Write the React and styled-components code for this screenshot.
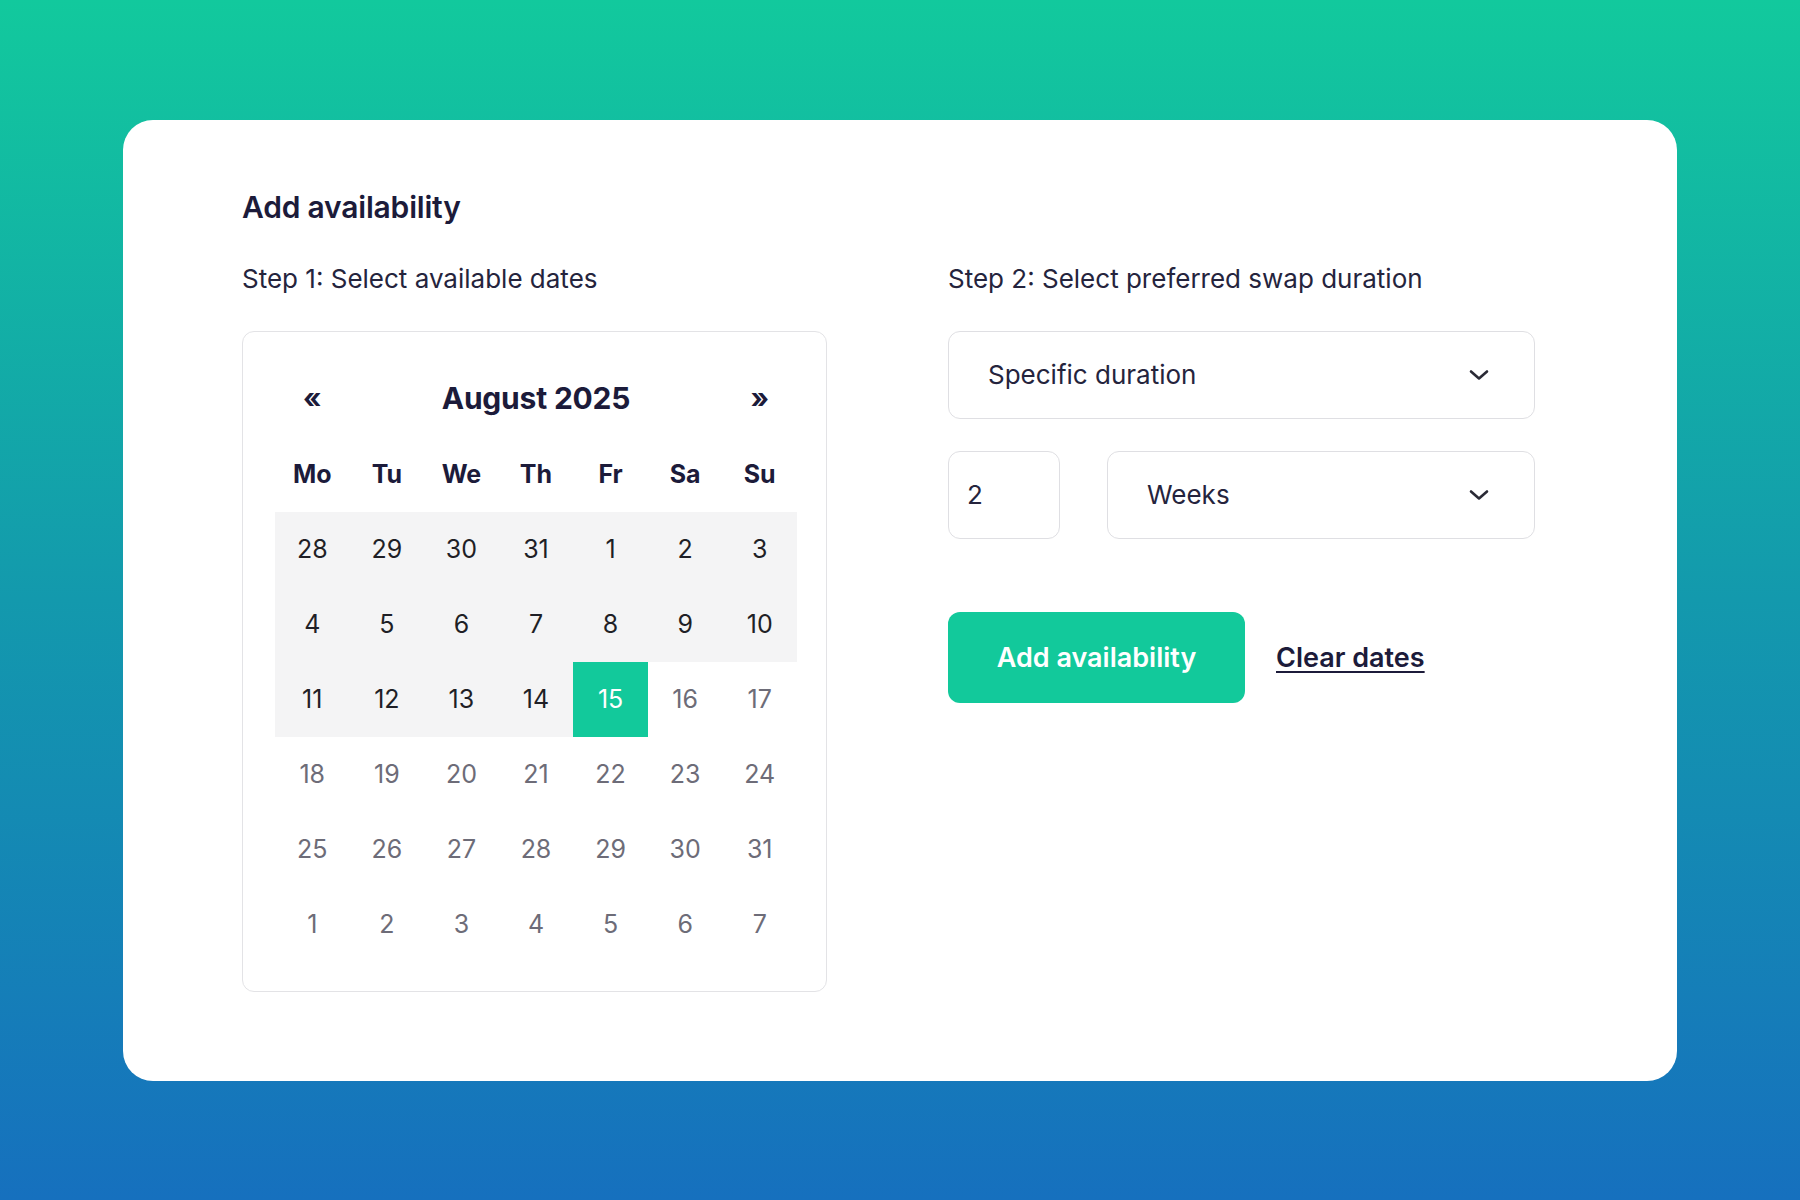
import React from "react";
import styled, { createGlobalStyle } from "styled-components";

const GlobalStyle = createGlobalStyle`
  html, body { margin: 0; padding: 0; }
  body {
    font-family: Inter, "Noto Sans", "Liberation Sans", sans-serif;
    background: linear-gradient(180deg, #12c99d 0%, #1399ad 50%, #1670be 100%);
    min-height: 1200px;
  }
  * { box-sizing: border-box; }
`;

const Page = styled.div`
  width: 1800px;
  height: 1200px;
  display: flex;
  align-items: center;
  justify-content: center;
`;

const Card = styled.section`
  width: 1554px;
  height: 961px;
  background: #ffffff;
  border-radius: 30px;
  padding: 69px 119px 0 119px;
  color: #1d1c3b;
`;

const Title = styled.h1`
  margin: 0;
  font-size: 30px;
  line-height: 36px;
  font-weight: 600;
  letter-spacing: -0.2px;
  color: #1c1b3a;
`;

const Columns = styled.div`
  display: grid;
  grid-template-columns: 585px 587px;
  column-gap: 121px;
  align-items: start;
  margin-top: 39px;
`;

const Column = styled.div`
  display: flex;
  flex-direction: column;
`;

const StepLabel = styled.p`
  margin: 0 0 37px 0;
  font-size: 26px;
  line-height: 30px;
  font-weight: 400;
  color: #25243d;
`;

const CalendarBox = styled.div`
  width: 585px;
  height: 661px;
  border: 1.5px solid #e3e3e6;
  border-radius: 12px;
  padding: 46px 0 0 3px;
  display: flex;
  flex-direction: column;
  align-items: center;
`;

const NavRow = styled.div`
  width: 522px;
  height: 40px;
  display: grid;
  grid-template-columns: 74.5px 1fr 74.5px;
  align-items: center;
  justify-items: center;
`;

const NavArrow = styled.span`
  font-size: 28px;
  font-weight: 700;
  color: #1c1b3a;
  line-height: 1;
  cursor: pointer;
`;

const MonthTitle = styled.span`
  font-size: 30px;
  font-weight: 700;
  color: #1c1b3a;
  letter-spacing: -0.2px;
`;

const WeekRow = styled.div`
  width: 522px;
  height: 40px;
  margin-top: 36px;
  display: grid;
  grid-template-columns: repeat(7, 1fr);
  align-items: center;
  justify-items: center;
`;

const WeekDay = styled.span`
  font-size: 25px;
  font-weight: 700;
  color: #1c1b3a;
`;

const DayGrid = styled.div`
  width: 522px;
  margin-top: 18px;
  display: grid;
  grid-template-columns: repeat(7, 1fr);
  grid-auto-rows: 75px;
`;

const Day = styled.div`
  display: flex;
  align-items: center;
  justify-content: center;
  font-size: 25px;
  font-weight: 400;
  background: ${(p) =>
    p.$selected ? "#12c99b" : p.$inRange ? "#f4f4f5" : "transparent"};
  color: ${(p) =>
    p.$selected ? "#ffffff" : p.$inRange ? "#1f1f26" : "#6d6c78"};
`;

const Field = styled.div`
  height: 88px;
  border: 1.5px solid #dfdfe3;
  border-radius: 12px;
  display: flex;
  align-items: center;
  justify-content: space-between;
  padding: ${(p) => (p.$narrow ? "0 18px" : "0 44px 0 39px")};
  font-size: 26px;
  color: #25243d;
  width: ${(p) => (p.$narrow ? "112px" : "auto")};
  flex: ${(p) => (p.$narrow ? "0 0 112px" : p.$grow ? "1 1 auto" : "0 0 auto")};
`;

const FieldRow = styled.div`
  display: flex;
  gap: 47px;
  margin-top: 32px;
`;

const Actions = styled.div`
  display: flex;
  align-items: center;
  gap: 31px;
  margin-top: 73px;
`;

const PrimaryButton = styled.button`
  width: 297px;
  height: 91px;
  border: none;
  border-radius: 12px;
  background: #12c99b;
  color: #ffffff;
  font-family: inherit;
  font-size: 27px;
  font-weight: 600;
  cursor: pointer;
`;

const LinkButton = styled.a`
  font-size: 27px;
  font-weight: 600;
  color: #1c1b3a;
  text-decoration: underline;
  text-underline-offset: 4px;
  text-decoration-thickness: 2px;
  cursor: pointer;
`;

const Chevron = () => (
  <svg width="22" height="14" viewBox="0 0 22 14" fill="none">
    <path
      d="M3 3.5 L11 10.5 L19 3.5"
      stroke="#2a2a35"
      strokeWidth="2.6"
      strokeLinecap="round"
      strokeLinejoin="round"
    />
  </svg>
);

const weekdays = ["Mo", "Tu", "We", "Th", "Fr", "Sa", "Su"];

const days = [
  28, 29, 30, 31, 1, 2, 3,
  4, 5, 6, 7, 8, 9, 10,
  11, 12, 13, 14, 15, 16, 17,
  18, 19, 20, 21, 22, 23, 24,
  25, 26, 27, 28, 29, 30, 31,
  1, 2, 3, 4, 5, 6, 7,
];

export default function App() {
  return (
    <>
      <GlobalStyle />
      <Page>
        <Card>
          <Title>Add availability</Title>
          <Columns>
            <Column>
              <StepLabel>Step 1: Select available dates</StepLabel>
              <CalendarBox>
                <NavRow>
                  <NavArrow>«</NavArrow>
                  <MonthTitle>August 2025</MonthTitle>
                  <NavArrow>»</NavArrow>
                </NavRow>
                <WeekRow>
                  {weekdays.map((d) => (
                    <WeekDay key={d}>{d}</WeekDay>
                  ))}
                </WeekRow>
                <DayGrid>
                  {days.map((d, i) => (
                    <Day key={i} $inRange={i < 18} $selected={i === 18}>
                      {d}
                    </Day>
                  ))}
                </DayGrid>
              </CalendarBox>
            </Column>
            <Column>
              <StepLabel>Step 2: Select preferred swap duration</StepLabel>
              <Field>
                <span>Specific duration</span>
                <Chevron />
              </Field>
              <FieldRow>
                <Field $narrow>
                  <span>2</span>
                </Field>
                <Field $grow>
                  <span>Weeks</span>
                  <Chevron />
                </Field>
              </FieldRow>
              <Actions>
                <PrimaryButton>Add availability</PrimaryButton>
                <LinkButton>Clear dates</LinkButton>
              </Actions>
            </Column>
          </Columns>
        </Card>
      </Page>
    </>
  );
}
